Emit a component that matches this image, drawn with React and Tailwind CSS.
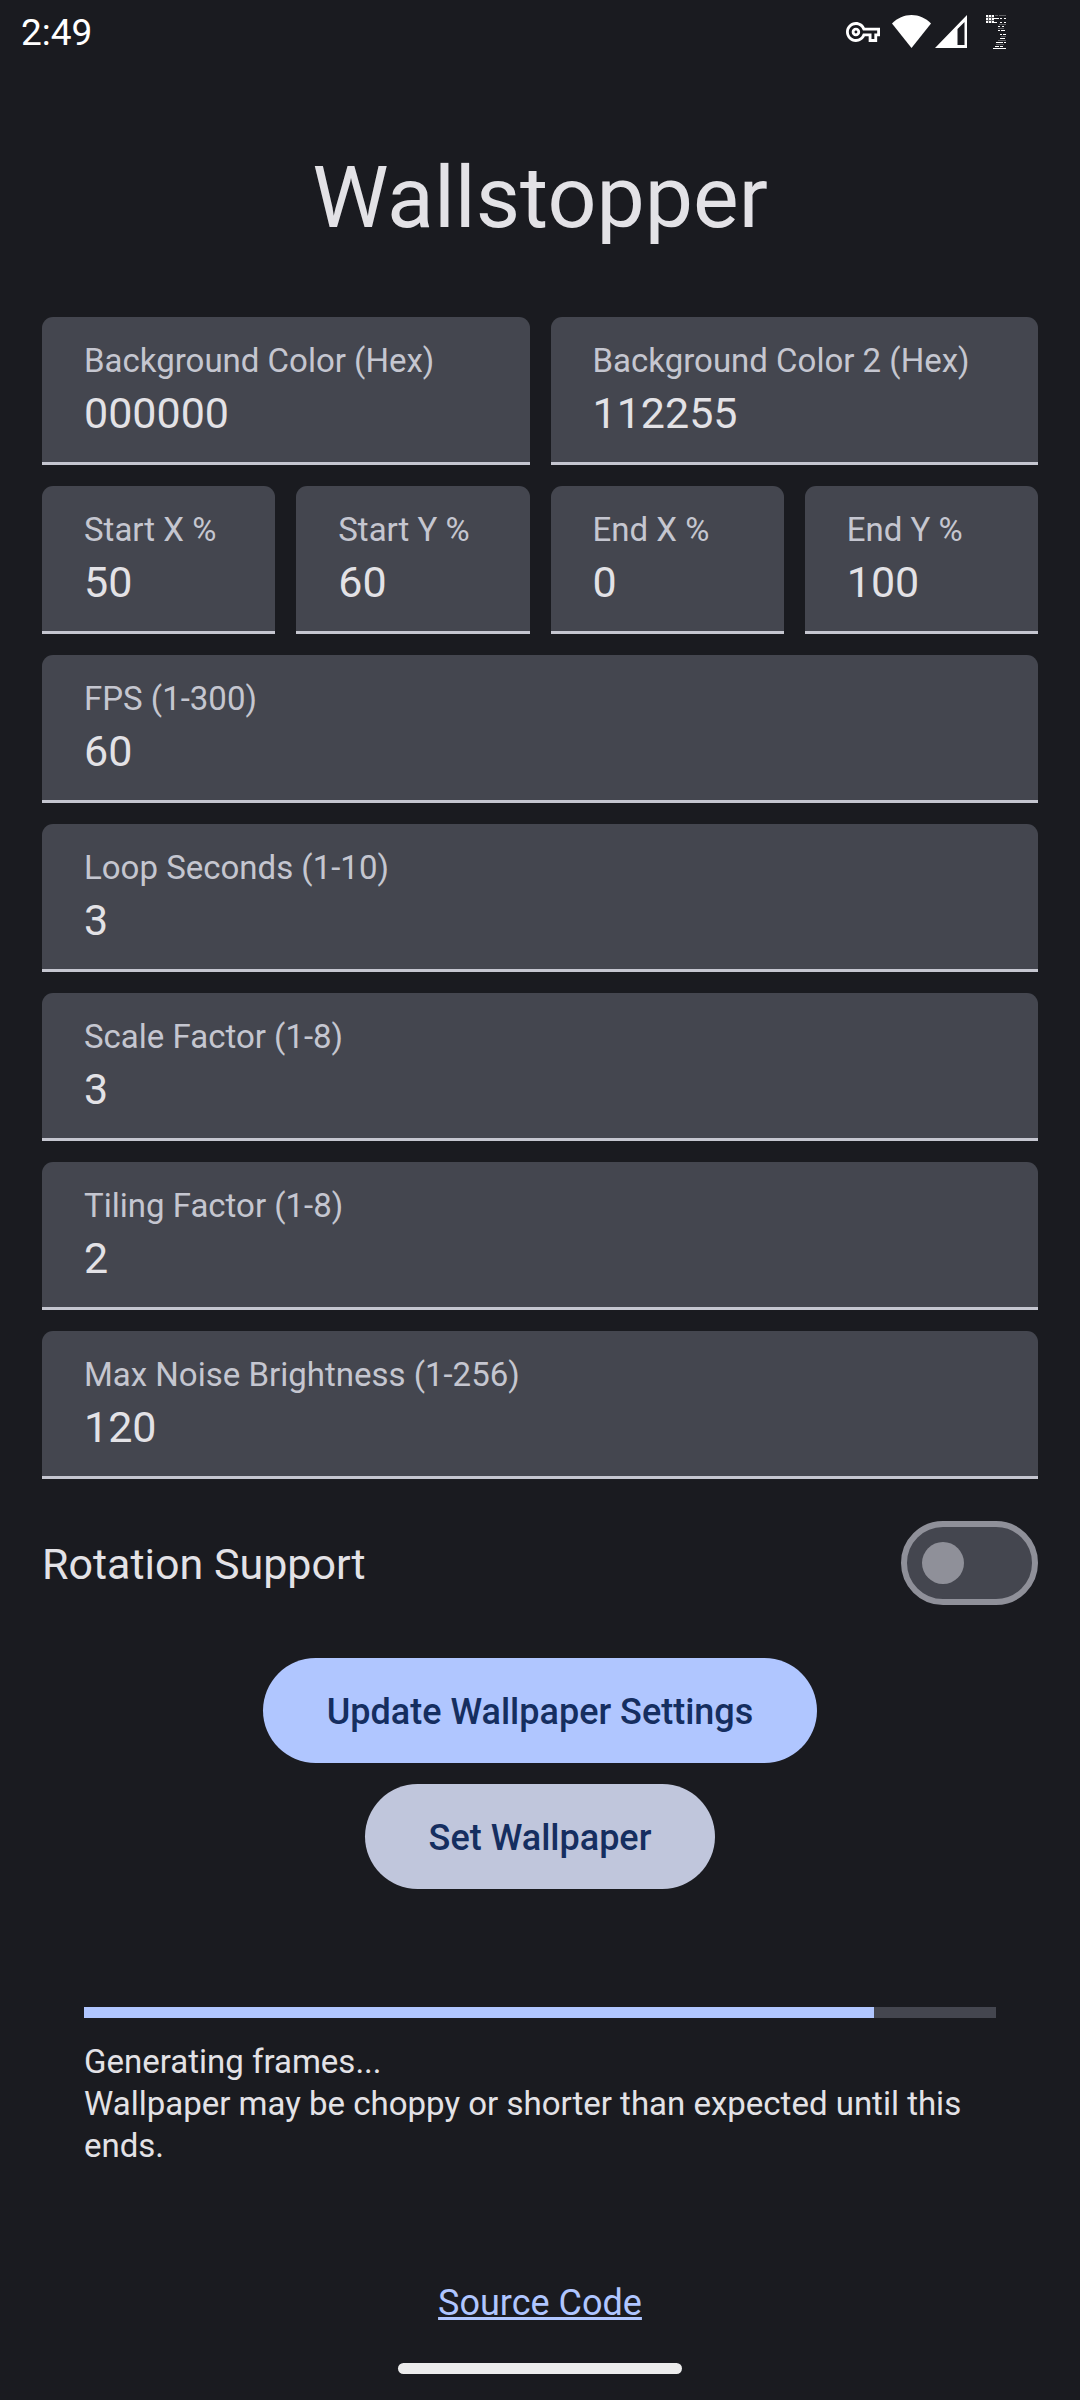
import { useState } from "react";
import { MdOutlineVpnKey } from "react-icons/md";

function Field({ id, label, initial }) {
  const [value, setValue] = useState(initial);
  return (
    <div className="flex h-[148px] min-w-0 flex-col rounded-t-[11px] border-b-[3px] border-[#c5c6d0] bg-[#44464f] px-[42px] pt-[23px]">
      <label htmlFor={id} className="text-[33px] leading-[42px] whitespace-nowrap text-[#c5c6d0]">
        {label}
      </label>
      <input
        id={id}
        value={value}
        onChange={(e) => setValue(e.target.value)}
        className="h-[63px] w-full bg-transparent text-[43px] text-[#e3e2e6] outline-none"
      />
    </div>
  );
}

function StatusBar() {
  return (
    <header className="flex h-[63px] items-center justify-between pr-[74px] pl-[21px] text-white">
      <span className="pt-[2px] text-[37px] leading-[42px]">2:49</span>
      <div className="flex items-center">
        <MdOutlineVpnKey className="mr-3 size-[34px]" />
        <svg className="mr-1 h-[33px] w-[39px]" viewBox="0 0 39 33" fill="currentColor">
          <path d="M0 8.5C5.500 3 12 0 19.500 0S33.500 3 39 8.500L19.500 33Z" />
        </svg>
        <svg className="mr-[19px] h-[33px] w-8" viewBox="0 0 32 33" fill="currentColor">
          <path fillRule="evenodd" d="M32 0V33H0ZM22.500 14V30H29.500V7Z" />
        </svg>
        <svg className="h-[34px] w-5" viewBox="0 0 20 34" fill="currentColor" shapeRendering="crispEdges">
          <path d="M0 0h8v8H0z" opacity=".3" />
          <path d="M0 0h2v2H0zM3 0h2v2H3zM6 0h2v2H6zM0 3h2v2H0zM3 3h2v2H3zM6 3h2v2H6zM0 6h2v2H0zM3 6h2v2H3zM6 6h2v2H6z" />
          <path d="M8 3h5v1H8zM8 7h3v1H8zM14 3h2v1h-2zM18 3h2v1h-2zM14 7h2v1h-2zM18 7h2v1h-2zM12 11h2v1h-2zM16 11h2v1h-2zM12 15h2v1h-2zM15 15h4v1h-4zM17 19h3v1h-3zM14 19h2v1h-2zM14 23h5v1h-5zM10 27h7v1h-7zM18 27h2v1h-2zM9 31h4v1H9zM14 31h3v1h-3zM7 33h13v1H7z" />
          <path d="M9 0h3v1H9zM13 0h7v1h-7zM13 9h7v1h-7zM12 13h6v1h-6zM15 21h5v1h-5zM12 25h8v1h-8zM10 29h8v1h-8z" opacity=".3" />
        </svg>
      </div>
    </header>
  );
}

export default function App() {
  const [rotation, setRotation] = useState(false);
  return (
    <div className="flex min-h-screen flex-col bg-[#1a1b20] font-['Roboto',sans-serif] text-[#e3e2e6]">
      <StatusBar />
      <main className="flex flex-1 flex-col px-[42px]">
        <h1 className="mt-[82px] text-center text-[86px] leading-[105px]">Wallstopper</h1>
        <form className="mt-[67px] flex flex-col gap-[21px]" onSubmit={(e) => e.preventDefault()}>
          <div className="grid grid-cols-2 gap-[21px]">
            <Field id="color1" label="Background Color (Hex)" initial="000000" />
            <Field id="color2" label="Background Color 2 (Hex)" initial="112255" />
          </div>
          <div className="grid grid-cols-4 gap-[21px]">
            <Field id="startX" label="Start X %" initial="50" />
            <Field id="startY" label="Start Y %" initial="60" />
            <Field id="endX" label="End X %" initial="0" />
            <Field id="endY" label="End Y %" initial="100" />
          </div>
          <Field id="fps" label="FPS (1-300)" initial="60" />
          <Field id="loop" label="Loop Seconds (1-10)" initial="3" />
          <Field id="scale" label="Scale Factor (1-8)" initial="3" />
          <Field id="tiling" label="Tiling Factor (1-8)" initial="2" />
          <Field id="noise" label="Max Noise Brightness (1-256)" initial="120" />
          <div className="mt-[21px] flex items-center justify-between">
            <label htmlFor="rotation" className="pt-[2px] text-[43px] leading-[63px]">
              Rotation Support
            </label>
            <input
              id="rotation"
              type="checkbox"
              role="switch"
              checked={rotation}
              onChange={(e) => setRotation(e.target.checked)}
              className="flex h-[84px] w-[137px] appearance-none items-center rounded-full border-[6px] border-[#8f9099] bg-[#44464f] px-[15px] before:size-[42px] before:rounded-full before:bg-[#8f9099] checked:justify-end checked:bg-[#b0c6ff]"
            />
          </div>
          <div className="mt-8 flex flex-col items-center gap-[21px]">
            <button type="submit" className="h-[105px] rounded-full bg-[#b0c6ff] px-[64px] pt-[2px] text-[36px] font-medium text-[#152e60]">
              Update Wallpaper Settings
            </button>
            <button type="button" className="h-[105px] rounded-full bg-[#c0c6dc] px-[64px] pt-[2px] text-[36px] font-medium text-[#152e60]">
              Set Wallpaper
            </button>
          </div>
        </form>
        <section className="mt-[118px] px-[42px]">
          <div role="progressbar" aria-label="Generating frames" aria-valuenow={87} aria-valuemin={0} aria-valuemax={100} className="h-[11px] bg-[#44464f]">
            <div className="h-full bg-[#b0c6ff]" style={{ width: `${(13 / 15) * 100}%` }} />
          </div>
          <p className="mt-[23px] text-[33px] leading-[42px]">
            Generating frames...
            <br />
            Wallpaper may be choppy or shorter than expected until this ends.
          </p>
        </section>
      </main>
      <footer className="flex flex-col items-center pb-[26px]">
        <a href="#source" className="text-[36px] leading-[42px] text-[#b0c6ff] underline">
          Source Code
        </a>
        <div className="mt-[39px] h-[11px] w-[284px] rounded-full bg-[#ececec]" />
      </footer>
    </div>
  );
}
